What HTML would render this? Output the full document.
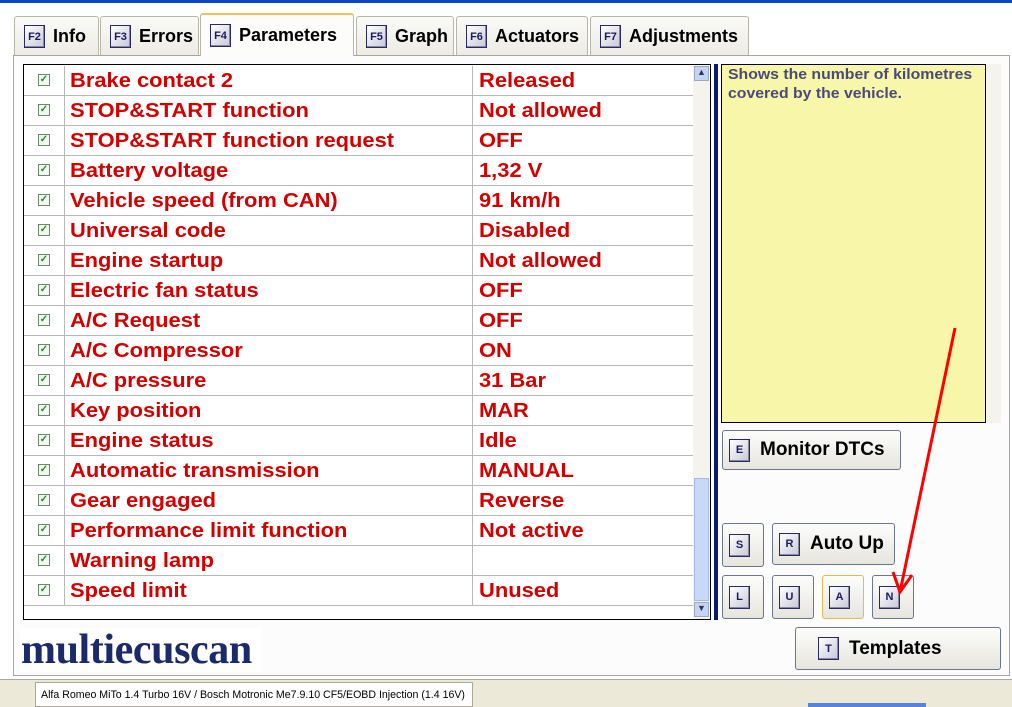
<!DOCTYPE html>
<html><head><style>
*{margin:0;padding:0;box-sizing:border-box}
body{width:1012px;height:707px;position:relative;background:#fff;font-family:"Liberation Sans",Arial,sans-serif;overflow:hidden}
.abs{position:absolute}
.tab{position:absolute;top:16px;height:40px;border:1px solid #b8b6aa;border-bottom:none;background:linear-gradient(#fafaf7,#ecebe4);font-weight:bold;font-size:18px;color:#000;display:flex;align-items:center;padding-left:9px;border-radius:3px 3px 0 0}
.tab.act{top:13px;height:43px;background:#fcfcfb;border-top:2px solid #f2c058;z-index:2}
.key{display:inline-flex;width:21px;height:23px;border:1px solid #2a2a60;background:linear-gradient(135deg,#fff,#c8c8d8);font-size:11px;font-weight:bold;color:#1a1a60;align-items:center;justify-content:center;margin-right:8px;box-shadow:inset -1px -1px 0 #8888a0}
.panel{left:13px;top:55px;width:997px;height:621px;border:1px solid #a8a69a;background:#fcfcfc}
.tbl{left:23px;top:64px;width:688px;height:556px;border:1px solid #000;background:#fff}
.row{position:absolute;left:0;height:30px;width:669px;border-bottom:1px solid #b8b8b8;font-size:20px;font-weight:bold;color:#d40000}
.row .c{position:absolute;left:14px;top:8px;width:12px;height:12px;border:1px solid #6a8a6a;background:#f0f8f0;color:#2a8a2a;font-size:10px;line-height:10px;text-align:center}
.row .n{position:absolute;left:40px;top:0;width:409px;height:30px;border-left:1px solid #b8b8b8;border-right:1px solid #b8b8b8}
.row .n i,.row .v{font-style:normal;position:absolute;left:5px;top:0;line-height:30px;white-space:nowrap;transform:scaleX(1.095);transform-origin:0 0}
.row .v{left:455px}
.btn{position:absolute;border:1px solid #6b7590;border-radius:3px;background:linear-gradient(#fdfdfb,#e6e5de);display:flex;align-items:center;padding-left:6px;font-weight:bold;font-size:19px}
.btn .key{margin-right:10px}
</style></head><body>
<div class="abs" style="left:0;top:0;width:1012px;height:3px;background:#0a46c8"></div>
<div class="tab" style="left:14px;width:85px"><span class="key">F2</span>Info</div>
<div class="tab" style="left:100px;width:99px"><span class="key">F3</span>Errors</div>
<div class="tab act" style="left:200px;width:154px"><span class="key">F4</span>Parameters</div>
<div class="tab" style="left:356px;width:98px"><span class="key">F5</span>Graph</div>
<div class="tab" style="left:456px;width:132px"><span class="key">F6</span>Actuators</div>
<div class="tab" style="left:590px;width:159px"><span class="key">F7</span>Adjustments</div>
<div class="abs panel"></div>
<div class="abs tbl">
<div class="row" style="top:1px"><span class="c">✓</span><span class="n"><i>Brake contact 2</i></span><span class="v">Released</span></div>
<div class="row" style="top:31px"><span class="c">✓</span><span class="n"><i>STOP&amp;START function</i></span><span class="v">Not allowed</span></div>
<div class="row" style="top:61px"><span class="c">✓</span><span class="n"><i>STOP&amp;START function request</i></span><span class="v">OFF</span></div>
<div class="row" style="top:91px"><span class="c">✓</span><span class="n"><i>Battery voltage</i></span><span class="v">1,32 V</span></div>
<div class="row" style="top:121px"><span class="c">✓</span><span class="n"><i>Vehicle speed (from CAN)</i></span><span class="v">91 km/h</span></div>
<div class="row" style="top:151px"><span class="c">✓</span><span class="n"><i>Universal code</i></span><span class="v">Disabled</span></div>
<div class="row" style="top:181px"><span class="c">✓</span><span class="n"><i>Engine startup</i></span><span class="v">Not allowed</span></div>
<div class="row" style="top:211px"><span class="c">✓</span><span class="n"><i>Electric fan status</i></span><span class="v">OFF</span></div>
<div class="row" style="top:241px"><span class="c">✓</span><span class="n"><i>A/C Request</i></span><span class="v">OFF</span></div>
<div class="row" style="top:271px"><span class="c">✓</span><span class="n"><i>A/C Compressor</i></span><span class="v">ON</span></div>
<div class="row" style="top:301px"><span class="c">✓</span><span class="n"><i>A/C pressure</i></span><span class="v">31 Bar</span></div>
<div class="row" style="top:331px"><span class="c">✓</span><span class="n"><i>Key position</i></span><span class="v">MAR</span></div>
<div class="row" style="top:361px"><span class="c">✓</span><span class="n"><i>Engine status</i></span><span class="v">Idle</span></div>
<div class="row" style="top:391px"><span class="c">✓</span><span class="n"><i>Automatic transmission</i></span><span class="v">MANUAL</span></div>
<div class="row" style="top:421px"><span class="c">✓</span><span class="n"><i>Gear engaged</i></span><span class="v">Reverse</span></div>
<div class="row" style="top:451px"><span class="c">✓</span><span class="n"><i>Performance limit function</i></span><span class="v">Not active</span></div>
<div class="row" style="top:481px"><span class="c">✓</span><span class="n"><i>Warning lamp</i></span><span class="v"></span></div>
<div class="row" style="top:511px"><span class="c">✓</span><span class="n"><i>Speed limit</i></span><span class="v">Unused</span></div>
<div class="abs" style="left:669px;top:0;width:17px;height:554px;background:#f4f3ee"></div>
<div class="abs" style="left:670px;top:1px;width:15px;height:15px;background:#c4d4f4;border:1px solid #9ab;font-size:9px;text-align:center;color:#335">▲</div>
<div class="abs" style="left:670px;top:413px;width:15px;height:123px;background:#c8d8f8;border:1px solid #a8b8e0"></div>
<div class="abs" style="left:670px;top:537px;width:15px;height:15px;background:#c4d4f4;border:1px solid #9ab;font-size:9px;text-align:center;color:#335">▼</div>
</div>
<div class="abs" style="left:714px;top:64px;width:4px;height:556px;background:#0a1a70"></div>
<div class="abs" style="left:721px;top:64px;width:265px;height:359px;background:#f8f6a8;border:1px solid #000"></div>
<div class="abs" style="left:728px;top:66px;width:230px;font-size:14.5px;font-weight:bold;color:#4a4a7a;line-height:19px;transform:scaleX(1.09);transform-origin:0 0">Shows the number of kilometres covered by the vehicle.</div>
<div class="abs" style="left:986px;top:64px;width:15px;height:359px;background:#f4f3ee"></div>
<div class="btn" style="left:722px;top:430px;width:179px;height:40px"><span class="key">E</span>Monitor DTCs</div>
<div class="btn" style="left:722px;top:523px;width:42px;height:44px"><span class="key">S</span></div>
<div class="btn" style="left:772px;top:523px;width:123px;height:42px"><span class="key">R</span>Auto Up</div>
<div class="btn" style="left:722px;top:575px;width:42px;height:44px"><span class="key">L</span></div>
<div class="btn" style="left:772px;top:575px;width:42px;height:44px"><span class="key">U</span></div>
<div class="btn" style="left:822px;top:575px;width:42px;height:44px;border-color:#e8b858"><span class="key">A</span></div>
<div class="btn" style="left:872px;top:575px;width:42px;height:44px"><span class="key">N</span></div>
<div class="btn" style="left:795px;top:627px;width:206px;height:43px;padding-left:22px"><span class="key">T</span>Templates</div>
<svg class="abs" style="left:0;top:0" width="1012" height="707"><path d="M955 328 L900 592 M893 572 L900 592 L912 575" stroke="#f00" stroke-width="3" fill="none"/></svg>
<div class="abs" style="left:20px;top:628px;width:242px;height:44px;background:#fff;font-family:'Liberation Serif',serif;font-weight:bold;font-size:42px;color:#1a2a6a;line-height:44px;padding-left:1px;letter-spacing:-0.4px;white-space:nowrap;overflow:hidden">multiecuscan</div>
<div class="abs" style="left:0;top:679px;width:1012px;height:28px;background:#ece9d8;border-top:1px solid #aca899"></div>
<div class="abs" style="left:35px;top:682px;width:438px;height:25px;background:#fff;border:1px solid #aca899;font-size:10.6px;line-height:24px;padding-left:5px;white-space:nowrap">Alfa Romeo MiTo 1.4 Turbo 16V / Bosch Motronic Me7.9.10 CF5/EOBD Injection (1.4 16V)</div>
<div class="abs" style="left:808px;top:703px;width:118px;height:4px;background:#5a82d8"></div>
</body></html>
